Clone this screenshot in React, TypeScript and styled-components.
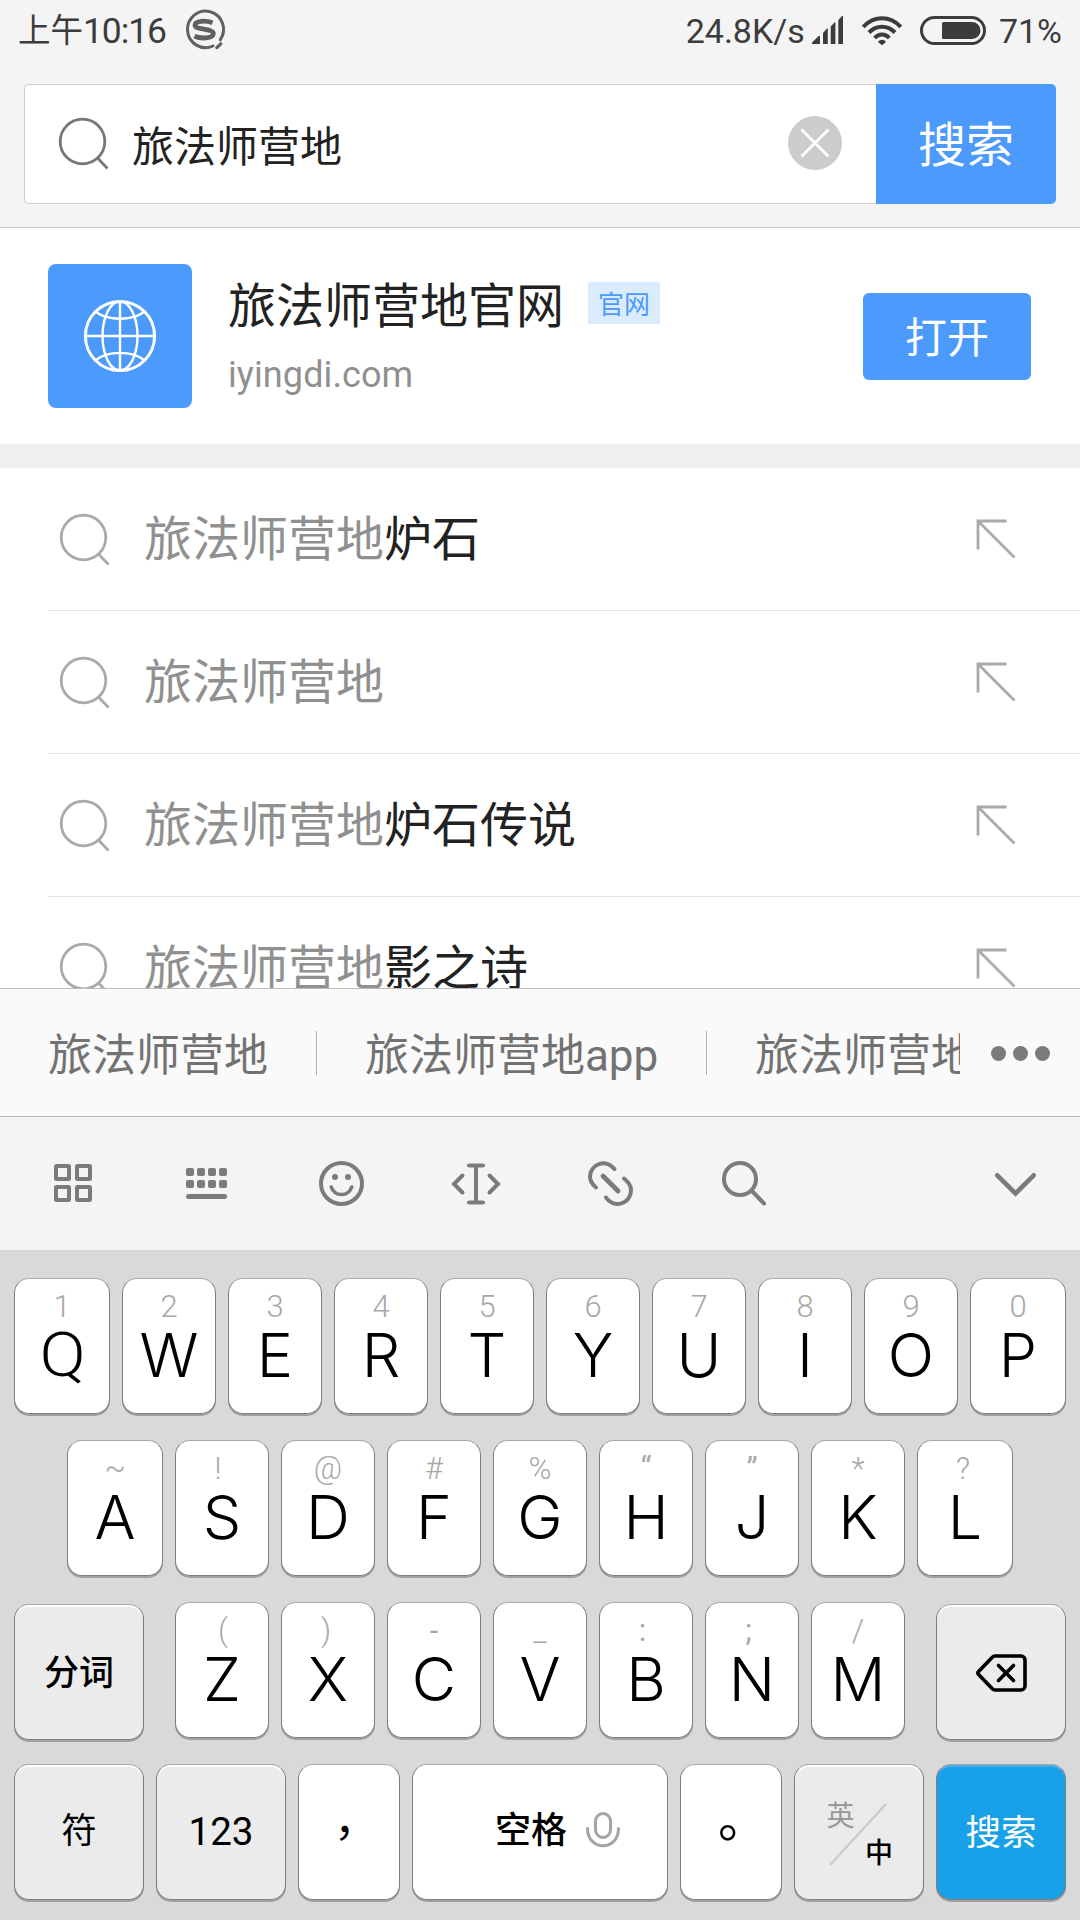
import React from 'react';
import styled, { createGlobalStyle } from 'styled-components';

const GlobalStyle = createGlobalStyle`
  * { box-sizing: border-box; }
  body { margin: 0; background: #fff; }
`;

const cjk = `Roboto, "Noto Sans CJK SC", sans-serif`;

const Screen = styled.div`
  width: 1080px;
  height: 1920px;
  display: flex;
  flex-direction: column;
  overflow: hidden;
  background: #fff;
  font-family: ${cjk};
  white-space: nowrap;
`;

/* ---------- status bar ---------- */

const StatusBar = styled.header`
  height: 84px;
  flex: none;
  display: flex;
  align-items: flex-start;
  justify-content: space-between;
  padding: 0 18px 0 18px;
  background: #f4f4f4;
  color: #3c3c3c;
`;

const StatusGroup = styled.div`
  height: 60px;
  display: flex;
  align-items: center;
`;

const StatusText = styled.span<{ $size: number; $gap?: number; $track?: number }>`
  padding-top: 2px;
  font-size: ${p => p.$size}px;
  line-height: 60px;
  letter-spacing: ${p => p.$track ?? 0}px;
  margin-right: ${p => p.$gap ?? 0}px;
`;

const Glyph = styled.svg<{ $gap?: number }>`
  display: block;
  flex: none;
  overflow: visible;
  margin-right: ${p => p.$gap ?? 0}px;
`;

/* ---------- search header ---------- */

const SearchHeader = styled.div`
  height: 144px;
  flex: none;
  padding: 0 24px;
  background: #f4f4f4;
  border-bottom: 1px solid #c8c8c8;
`;

const SearchRow = styled.div`
  display: flex;
  height: 120px;
`;

const SearchField = styled.div`
  flex: 1;
  display: flex;
  align-items: center;
  padding: 0 34px 2px 34px;
  background: #fff;
  border: 1px solid #ccc;
  border-right: 0;
  border-radius: 5px 0 0 5px;
`;

const Query = styled.span`
  flex: 1;
  margin-left: 23px;
  padding-top: 10px;
  font-size: 42px;
  line-height: 60px;
  color: #222;
`;

const SearchButton = styled.button`
  width: 180px;
  border: 0;
  padding: 4px 0 0;
  border-radius: 0 5px 5px 0;
  background: #4c9afb;
  color: #fff;
  font: 48px/116px ${cjk};
`;

/* ---------- official site card ---------- */

const SiteCard = styled.section`
  height: 240px;
  flex: none;
  display: flex;
  align-items: center;
  padding: 0 49px 0 48px;
  border-bottom: 24px solid #efefef;
`;

const SiteTile = styled.div`
  width: 144px;
  height: 144px;
  display: grid;
  place-items: center;
  border-radius: 8px;
  background: #4c9afb;
`;

const SiteInfo = styled.div`
  flex: 1;
  margin-left: 36px;
`;

const SiteTitle = styled.div`
  display: flex;
  align-items: center;
  height: 60px;
  font-size: 48px;
  line-height: 60px;
  color: #222;
`;

const SiteName = styled.span`
  padding-top: 4px;
`;

const Badge = styled.span`
  width: 72px;
  height: 42px;
  margin: -3px 0 0 24px;
  padding-top: 2px;
  border-radius: 3px;
  background: #dbebfe;
  color: #4c9afb;
  font-size: 26px;
  line-height: 42px;
  text-align: center;
`;

const SiteDomain = styled.div`
  margin-top: 17px;
  font-size: 36px;
  line-height: 46px;
  letter-spacing: 0.1px;
  color: #909090;
`;

const OpenButton = styled.button`
  width: 168px;
  height: 87px;
  padding: 5px 0 0;
  border: 0;
  border-radius: 6px;
  background: #4c9afb;
  color: #fff;
  font: 42px/82px ${cjk};
`;

/* ---------- suggestions ---------- */

const Suggestions = styled.ul`
  height: 520px;
  flex: none;
  margin: 0;
  padding: 0 0 0 48px;
  list-style: none;
  overflow: hidden;
`;

const Suggestion = styled.li`
  height: 143px;
  display: flex;
  align-items: center;
  padding: 0 64px 0 12px;
  border-bottom: 1px solid #e3e3e3;
`;

const SuggestionText = styled.span`
  flex: 1;
  margin-left: 34px;
  padding-top: 2px;
  font-size: 48px;
  line-height: 60px;
  color: #222;
`;

const Typed = styled.span`
  color: #909090;
`;

/* ---------- candidate strip ---------- */

const CandidateBar = styled.div`
  height: 129px;
  flex: none;
  display: flex;
  align-items: center;
  border-top: 1px solid #bbb;
  border-bottom: 1px solid #bbb;
  background: #fafafa;
`;

const CandidateList = styled.div`
  width: 960px;
  display: flex;
  align-items: center;
  overflow: hidden;
`;

const Candidate = styled.span`
  flex: none;
  padding: 7px 48px 0;
  font-size: 44px;
  line-height: 62px;
  color: #727272;
`;

const CandidateLatin = styled.span`
  letter-spacing: -0.1px;
`;

const CandidateRule = styled.i`
  flex: none;
  width: 1px;
  height: 44px;
  background: #b0b0b0;
`;

const MoreDots = styled.div`
  display: flex;
  gap: 7px;
  margin-left: 31px;
  padding-top: 1px;
`;

const Dot = styled.i`
  width: 15px;
  height: 15px;
  border-radius: 50%;
  background: #7b7b7b;
`;

/* ---------- keyboard ---------- */

const ToolBar = styled.div`
  height: 133px;
  flex: none;
  display: flex;
  padding-left: 6px;
  background: #f4f4f4;
`;

const Tool = styled.div<{ $last?: boolean }>`
  width: ${p => (p.$last ? 129 : 134.3)}px;
  margin-left: ${p => (p.$last ? 'auto' : 0)};
  padding-top: ${p => (p.$last ? 2 : 0)}px;
  display: grid;
  place-items: center;
`;

const Keyboard = styled.div`
  flex: 1;
  display: flex;
  flex-direction: column;
  gap: 26px;
  padding: 28px 14px 0;
  background: #d9d9d9;
`;

const KeyRow = styled.div<{ $split?: boolean }>`
  height: 136px;
  display: flex;
  justify-content: ${p => (p.$split ? 'space-between' : 'center')};
  gap: 12px;
`;

const KeyGroup = styled.div`
  display: flex;
  gap: 12px;
`;

type Tone = 'white' | 'grey' | 'blue';
const fill = { white: '#fff', grey: '#ebebeb', blue: '#18a0e8' };
const bevel = { white: '#fff', grey: '#fff', blue: '#48aee8' };

const Key = styled.div<{ $w: number; $tone?: Tone; $drop?: number }>`
  width: ${p => p.$w}px;
  height: 136px;
  flex: none;
  margin-top: ${p => p.$drop ?? 0}px;
  display: flex;
  flex-direction: column;
  align-items: center;
  border: 1px solid #7e7e7e;
  border-top-color: #a9a9a9;
  border-radius: 15px;
  background: ${p => fill[p.$tone ?? 'white']};
  box-shadow: 0 2px 0 #a0a0a0, inset 0 2px 0 ${p => bevel[p.$tone ?? 'white']};
`;

const Hint = styled.span<{ $x: number; $weight: number }>`
  height: 30px;
  margin-top: 13px;
  font: ${p => p.$weight} 31px/30px Roboto, sans-serif;
  color: #a8a8a8;
  transform: translateX(${p => p.$x}px);
`;

const Letter = styled.span<{ $roboto?: boolean }>`
  height: 60px;
  margin-top: 3px;
  font: 300 61px/60px ${p => (p.$roboto ? 'Roboto' : 'Inter')}, sans-serif;
  color: #000;
  transform: ${p => (p.$roboto ? 'translateX(1px) scaleX(1.12)' : 'none')};
`;

const KeyLabel = styled.span<{ $size: number; $top: number; $color?: string; $weight?: number }>`
  height: 50px;
  margin-top: ${p => p.$top}px;
  display: flex;
  align-items: center;
  font-size: ${p => p.$size}px;
  font-weight: ${p => p.$weight ?? 400};
  line-height: 50px;
  color: ${p => p.$color ?? '#000'};
`;

const Punctuation = styled.span<{ $size: number; $x: number; $y: number }>`
  height: 134px;
  font-size: ${p => p.$size}px;
  line-height: 134px;
  transform: translate(${p => p.$x}px, ${p => p.$y}px);
`;

const SpaceContent = styled.div`
  display: flex;
  align-items: flex-start;
  gap: 19px;
  padding-left: 35px;
`;

const MicIcon = styled(Glyph)`
  margin-top: 47px;
`;

const CenterIcon = styled(Glyph)`
  margin: 49px 0 0 0;
`;

const LangSwitch = styled.div`
  position: relative;
  width: 100%;
  height: 100%;
`;

const LangMark = styled.span<{ $x: number; $y: number; $color: string; $weight: number }>`
  position: absolute;
  left: ${p => p.$x}px;
  top: ${p => p.$y}px;
  font-size: 28px;
  line-height: 32px;
  font-weight: ${p => p.$weight};
  color: ${p => p.$color};
`;

const LangSlash = styled.svg`
  position: absolute;
  left: 34px;
  top: 38px;
`;

/* ---------- drawings ---------- */

const Magnifier = ({ color, r = 22.3 }: { color: string; r?: number }) => (
  <Glyph width="50" height="52" viewBox="0 0 50 52" fill="none" stroke={color} strokeWidth="2.8">
    <circle cx="23.5" cy="24.5" r={r} />
    <path d="M38 40.5 48.5 51.500" />
  </Glyph>
);

const SogouMark = () => (
  <Glyph width="40" height="40" viewBox="0 0 40 40" fill="none" stroke="#606060">
    <path d="M36.300 29.800A18 18.300 0 1 0 29 36" strokeWidth="3" strokeLinecap="round" />
    <path d="M32.800 37.600 36.800 33.800" strokeWidth="3.200" strokeLinecap="round" />
    <path d="M28.500 12.800C22 10.300 11 10.500 11 15.200c0 4.700 18.300 3.300 18.300 8.300 0 5.400-13 5.300-18.800 2.800" strokeWidth="4.800" />
  </Glyph>
);

const Signal = () => (
  <Glyph width="31" height="28" viewBox="0 0 31 28" fill="#3c3c3c" $gap={19}>
    <path d="M0 28v-1.500L6.700 20H8v8zM11 28V17l4-4.500h.8V28zM18.700 28V10.500l4-4.300h.7V28zM26.300 28V4l3.700-4h1v28z" />
  </Glyph>
);

const Wifi = () => (
  <Glyph width="40" height="29" viewBox="0 0 40 29" fill="none" stroke="#3c3c3c" strokeWidth="4" $gap={18}>
    <path d="M1.200 10.800C12-.7 28-.7 38.800 10.800" />
    <path d="M7 16.500c7.500-7.700 18.500-7.700 26 0" />
    <path d="M12.700 22c4.300-4.600 10.300-4.600 14.600 0" />
    <path d="M16 26c2-3 6-3 8 0l-4 3.300z" fill="#3c3c3c" stroke="none" />
  </Glyph>
);

const Battery = () => (
  <Glyph width="66" height="29" viewBox="0 0 66 29" $gap={13}>
    <rect x="1.500" y="1.500" width="63" height="26" rx="13" fill="none" stroke="#3c3c3c" strokeWidth="3" />
    <path d="M23.500 6H52a8.500 8.500 0 0 1 0 17H23.500a1.500 1.500 0 0 1-1.500-1.500v-14A1.500 1.500 0 0 1 23.500 6z" fill="#3c3c3c" />
  </Glyph>
);

const Clear = () => (
  <Glyph width="54" height="54" viewBox="0 0 54 54">
    <circle cx="27" cy="27" r="27" fill="#ccc" />
    <path d="M13.500 13.500l27 27M40.500 13.500l-27 27" stroke="#fff" strokeWidth="2.800" />
  </Glyph>
);

const Globe = () => (
  <Glyph width="72" height="72" viewBox="0 0 72 72" fill="none" stroke="#fff" strokeWidth="2.400">
    <circle cx="36" cy="36" r="34.600" strokeWidth="3" />
    <ellipse cx="36" cy="36" rx="17.500" ry="34.500" />
    <path d="M36 1v70M1 36h70M12 12c12 9 36 9 48 0M12 60c12-9.500 36-9.500 48 0" />
  </Glyph>
);

const FillArrow = () => (
  <Glyph width="40" height="40" viewBox="0 0 40 40" fill="none" stroke="#aaa" strokeWidth="2.800">
    <path d="M30.500 2H2v28.500M2 2l36.500 36.500" />
  </Glyph>
);

const tool = '#7b7b7b';

const GridIcon = () => (
  <Glyph width="38" height="39" viewBox="0 0 38 39" fill="none" stroke={tool} strokeWidth="4">
    {[[2, 2], [23, 2], [2, 23], [23, 23]].map(([x, y]) => (
      <rect key={`${x}-${y}`} x={x} y={y} width="13" height="13" rx="0.500" />
    ))}
  </Glyph>
);

const KeysIcon = () => (
  <Glyph width="43" height="32" viewBox="0 0 43 32" fill={tool}>
    {[0, 12].map(y => [0, 11, 22, 33].map(x => (
      <rect key={`${x}-${y}`} x={x} y={y} width="8" height="8" rx="2" />
    )))}
    <rect y="26" width="41" height="5" rx="2.500" />
  </Glyph>
);

const SmileIcon = () => (
  <Glyph width="45" height="45" viewBox="0 0 45 45" fill="none" stroke={tool} strokeWidth="4">
    <circle cx="22.500" cy="22.500" r="20.500" />
    <circle cx="16" cy="16" r="3" fill={tool} stroke="none" />
    <circle cx="29" cy="16" r="3" fill={tool} stroke="none" />
    <path d="M12.200 26c3.500 10 17 10 20.600 0" strokeLinecap="round" strokeWidth="3.600" />
  </Glyph>
);

const CursorIcon = () => (
  <Glyph width="48" height="42" viewBox="0 0 48 42" fill="none" stroke={tool} strokeWidth="4" strokeLinecap="round">
    <path d="M17 2.500h14M17 39.500h14M24 2.500v37M10.500 12.500 2 21l8.500 8.500M37.500 12.500 46 21l-8.500 8.500" />
  </Glyph>
);

const LinkIcon = () => (
  <Glyph width="45" height="45" viewBox="0 0 45 45" fill="none" stroke={tool} strokeWidth="4" strokeLinecap="round">
    <path d="M26.500 8A13.500 13.500 0 0 0 2 15.500c0 4.500 2.500 8 6 11M18 36.500A13.500 13.500 0 0 0 43 29c0-4.500-2.500-8-7-11.500" />
    <path d="M15 15 30 30" strokeWidth="4.800" />
  </Glyph>
);

const SearchIcon = () => (
  <Glyph width="46" height="45" viewBox="0 0 46 45" fill="none" stroke={tool} strokeWidth="4" strokeLinecap="round">
    <circle cx="18" cy="18" r="16" />
    <path d="M30 30 42 42.500" />
  </Glyph>
);

const ChevronIcon = () => (
  <Glyph width="41" height="24" viewBox="0 0 41 24" fill="none" stroke={tool} strokeWidth="4.600" strokeLinecap="round">
    <path d="M2.300 2.300 20.500 20.500 38.700 2.300" />
  </Glyph>
);

const Backspace = () => (
  <CenterIcon width="51" height="38" viewBox="0 0 51 38" fill="none" stroke="#000" strokeWidth="3.600" strokeLinecap="round" strokeLinejoin="round">
    <path d="M19 2h26a4 4 0 0 1 4 4v26a4 4 0 0 1-4 4H19q-1.500 0-2.700-1.200L2.600 20.500q-1.400-1.500 0-3L16.300 3.200Q17.500 2 19 2z" />
    <path d="M22.500 11.500l15 15M37.500 11.500l-15 15" />
  </CenterIcon>
);

/* ---------- screen ---------- */

const suggestions = ['炉石', '', '炉石传说', '影之诗'];

const tools = [GridIcon, KeysIcon, SmileIcon, CursorIcon, LinkIcon, SearchIcon];

/* optical nudge for the narrow marks above the letters */
const hintShift: Record<string, number> = { '!': -4, '?': -2, ')': -2, '(': 1, ':': -3.5, ';': -3.5 };
const heavyHints = '“”:;-';

const LetterKeys = ({ letters, hints, wideEnds }: { letters: string; hints: string; wideEnds?: boolean }) => (
  <>
    {letters.split('').map((l, i) => (
      <Key key={l} $w={wideEnds && (i === 0 || i === letters.length - 1) ? 96 : 94}>
        <Hint $x={hintShift[hints[i]] ?? 0} $weight={heavyHints.includes(hints[i]) ? 400 : 300}>{hints[i]}</Hint>
        <Letter $roboto={l === 'Q'}>{l}</Letter>
      </Key>
    ))}
  </>
);

export default function App() {
  return (
    <Screen>
      <GlobalStyle />
      <StatusBar>
        <StatusGroup>
          <StatusText $size={32.500}>上午</StatusText>
          <StatusText $size={35.500} $track={-1.100} $gap={18}>10:16</StatusText>
          <SogouMark />
        </StatusGroup>
        <StatusGroup>
          <StatusText $size={34} $gap={7}>24.8K/s</StatusText>
          <Signal />
          <Wifi />
          <Battery />
          <StatusText $size={34}>71%</StatusText>
        </StatusGroup>
      </StatusBar>

      <SearchHeader>
        <SearchRow>
          <SearchField>
            <Magnifier color="#777" />
            <Query>旅法师营地</Query>
            <Clear />
          </SearchField>
          <SearchButton>搜索</SearchButton>
        </SearchRow>
      </SearchHeader>

      <SiteCard>
        <SiteTile><Globe /></SiteTile>
        <SiteInfo>
          <SiteTitle><SiteName>旅法师营地官网</SiteName><Badge>官网</Badge></SiteTitle>
          <SiteDomain>iyingdi.com</SiteDomain>
        </SiteInfo>
        <OpenButton>打开</OpenButton>
      </SiteCard>

      <Suggestions>
        {suggestions.map(s => (
          <Suggestion key={s}>
            <Magnifier color="#aaa" />
            <SuggestionText><Typed>旅法师营地</Typed>{s}</SuggestionText>
            <FillArrow />
          </Suggestion>
        ))}
      </Suggestions>

      <CandidateBar>
        <CandidateList>
          <Candidate>旅法师营地</Candidate>
          <CandidateRule />
          <Candidate>旅法师营地<CandidateLatin>app</CandidateLatin></Candidate>
          <CandidateRule />
          <Candidate>旅法师营地</Candidate>
        </CandidateList>
        <MoreDots><Dot /><Dot /><Dot /></MoreDots>
      </CandidateBar>

      <ToolBar>
        {tools.map((Icon, i) => <Tool key={i}><Icon /></Tool>)}
        <Tool $last><ChevronIcon /></Tool>
      </ToolBar>

      <Keyboard>
        <KeyRow><LetterKeys letters="QWERTYUIOP" hints="1234567890" wideEnds /></KeyRow>
        <KeyRow><LetterKeys letters="ASDFGHJKL" hints="~!@#%“”*?" wideEnds /></KeyRow>
        <KeyRow $split>
          <Key $w={130} $tone="grey" $drop={2}><KeyLabel $size={35} $top={44} $weight={500}>分词</KeyLabel></Key>
          <KeyGroup><LetterKeys letters="ZXCVBNM" hints="()-_:;/" /></KeyGroup>
          <Key $w={130} $tone="grey" $drop={2}><Backspace /></Key>
        </KeyRow>
        <KeyRow>
          <Key $w={130} $tone="grey"><KeyLabel $size={35.500} $top={41}>符</KeyLabel></Key>
          <Key $w={130} $tone="grey"><KeyLabel $size={38.500} $top={42}>123</KeyLabel></Key>
          <Key $w={102}><Punctuation $size={44} $x={7} $y={-11}>，</Punctuation></Key>
          <Key $w={256}>
            <SpaceContent>
              <KeyLabel $size={36} $top={41} $weight={500}>空格</KeyLabel>
              <MicIcon width="34" height="36" viewBox="0 0 34 36" fill="none" stroke="#a5a5a5" strokeWidth="3">
                <rect x="9.500" y="1.500" width="15" height="24" rx="7.500" />
                <path d="M1.500 16.500c0 23 31 23 31 0" strokeLinecap="round" />
              </MicIcon>
            </SpaceContent>
          </Key>
          <Key $w={102}><Punctuation $size={50} $x={12} $y={-12}>。</Punctuation></Key>
          <Key $w={130} $tone="grey">
            <LangSwitch>
              <LangMark $x={31.500} $y={36} $color="#999" $weight={400}>英</LangMark>
              <LangMark $x={70} $y={73} $color="#000" $weight={500}>中</LangMark>
              <LangSlash width="60" height="64" viewBox="0 0 60 64" stroke="#ccc" strokeWidth="2.500">
                <path d="M1 62 57 1" />
              </LangSlash>
            </LangSwitch>
          </Key>
          <Key $w={130} $tone="blue"><KeyLabel $size={35.500} $top={43} $color="#fff">搜索</KeyLabel></Key>
        </KeyRow>
      </Keyboard>
    </Screen>
  );
}
